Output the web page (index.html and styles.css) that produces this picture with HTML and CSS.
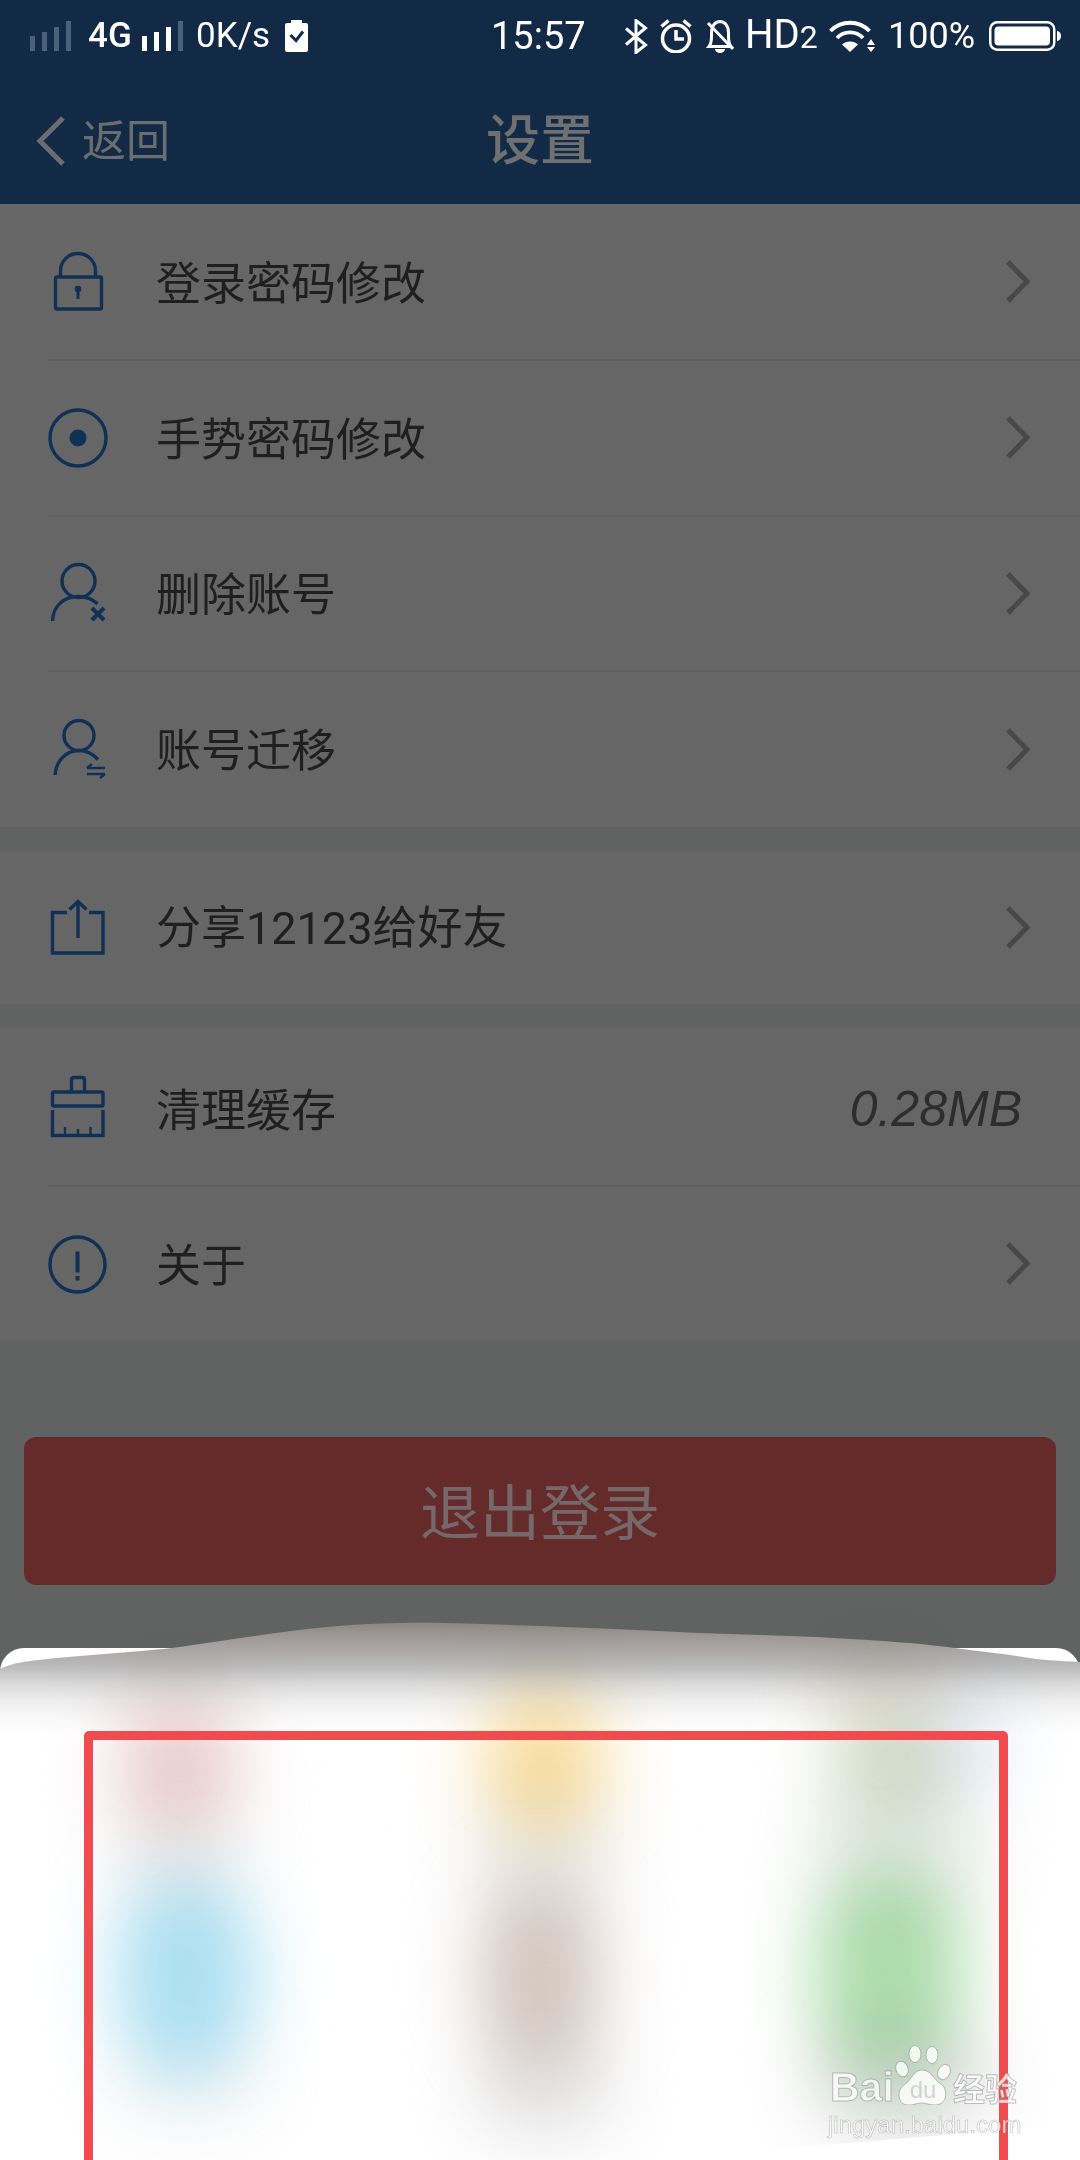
FILE: index.html
```html
<!DOCTYPE html>
<html lang="zh-CN">
<head>
<meta charset="utf-8">
<title>设置</title>
<link rel="stylesheet" href="styles.css">
</head>
<body>
<div class="page">
  <header class="header">
    <div class="status">
      <svg class="sig sig-a" viewBox="0 0 41 30"><g class="dim"><rect x="0" y="15" width="5" height="15"/><rect x="12" y="11" width="5" height="19"/><rect x="24" y="6" width="5" height="24"/><rect x="36" y="0" width="5" height="30"/></g></svg>
      <span class="st st-4g">4G</span>
      <svg class="sig sig-b" viewBox="0 0 41 30"><g class="wht"><rect x="0" y="15" width="5" height="15"/><rect x="12" y="11" width="5" height="19"/><rect x="24" y="6" width="5" height="24"/></g><g class="dim"><rect x="36" y="0" width="5" height="30"/></g></svg>
      <span class="st st-speed">0K/s</span>
      <svg class="check" viewBox="0 0 23 32"><path class="wht" d="M6 0H17V3H21a2 2 0 0 1 2 2V30a2 2 0 0 1-2 2H2a2 2 0 0 1-2-2V5a2 2 0 0 1 2-2H6Z"/><path class="check-mark" d="M5.500 15L11 20.500L18 11.500"/></svg>
      <span class="st st-time">15:57</span>
      <svg class="bt" viewBox="0 0 24 35"><path d="M2 9.500L21.500 26L12 33.500V1.500L21.500 9L2 25.500"/></svg>
      <svg class="alarm" viewBox="0 0 32 34"><circle cx="16" cy="19.500" r="13.500"/><path d="M16 11V20H24M1.500 7.500L8.500 1.500M30.500 7.500L23.500 1.500"/></svg>
      <svg class="bell" viewBox="0 0 28 33"><path d="M3 26.500C6 23 5.500 19 5.500 13C5.500 6 9 1.500 14 1.500C19 1.500 22.500 6 22.500 13C22.500 19 22 23 25 26.500Z"/><path d="M2 3L27 29"/><path class="wht no-stroke" d="M9 29H19A5 4 0 0 1 9 29Z"/></svg>
      <span class="st st-hd">HD<span class="st-two">2</span></span>
      <svg class="wifi" viewBox="0 0 46 32"><path d="M1.500 11C12 0 30 0 40.500 11"/><path d="M8 18C15 10.500 27 10.500 34 18"/><path class="wht no-stroke" d="M13 24.500C17 20.500 25 20.500 29 24.500L21 32Z"/><path class="wht no-stroke" d="M38 25L42 19L46 25ZM38 27H46L42 32Z"/></svg>
      <span class="st st-pct">100%</span>
      <svg class="batt" viewBox="0 0 72 30"><rect x="1.250" y="1.250" width="64" height="27.500" rx="7"/><rect class="wht no-stroke" x="5.500" y="5.500" width="55.500" height="19" rx="4"/><path class="wht no-stroke" d="M68 10C70.500 10.500 72 12 72 15C72 18 70.500 19.500 68 20Z"/></svg>
    </div>
    <nav class="nav">
      <div class="back">
        <svg class="back-icon" viewBox="0 0 30 50"><path d="M27 2L4 25L27 48"/></svg>
        <span class="back-text">返回</span>
      </div>
      <h1 class="title">设置</h1>
      <div></div>
    </nav>
  </header>

  <section class="group">
    <div class="row">
      <svg class="ico" viewBox="0 0 60 60"><rect x="7.500" y="25" width="46" height="32" rx="1.500"/><path d="M12.500 25V19A17.500 17.500 0 0 1 47.500 19V25"/><circle class="fill" cx="30" cy="37" r="3.300"/><rect class="fill" x="28.500" y="37" width="3" height="10"/></svg>
      <span class="label">登录密码修改</span>
      <svg class="chev" viewBox="0 0 24 43"><path d="M2 2L21 21.500L2 41"/></svg>
    </div>
    <div class="row">
      <svg class="ico" viewBox="0 0 60 60"><circle cx="30" cy="30" r="28"/><circle class="fill" cx="30" cy="30" r="8.500"/></svg>
      <span class="label">手势密码修改</span>
      <svg class="chev" viewBox="0 0 24 43"><path d="M2 2L21 21.500L2 41"/></svg>
    </div>
    <div class="row">
      <svg class="ico" viewBox="0 0 60 60"><circle cx="30.500" cy="18" r="16.500"/><path d="M4.500 58C5 43 16 33.500 30 33.500C37 33.500 44 35.500 49.500 41"/><path class="thick" d="M44 45L56 57M56 45L44 57"/></svg>
      <span class="label">删除账号</span>
      <svg class="chev" viewBox="0 0 24 43"><path d="M2 2L21 21.500L2 41"/></svg>
    </div>
    <div class="row">
      <svg class="ico" viewBox="0 0 60 60"><circle cx="31" cy="16.500" r="15"/><path d="M7 56C8 42 18 31.500 31 31.500C38 31.500 45 35 50 40.500"/><path class="thin" d="M39 49H57M39 49L44 45M39 55H57M57 55L52 59"/></svg>
      <span class="label">账号迁移</span>
      <svg class="chev" viewBox="0 0 24 43"><path d="M2 2L21 21.500L2 41"/></svg>
    </div>
  </section>

  <section class="group group-share">
    <div class="row row-share">
      <svg class="ico" viewBox="0 0 60 60"><path d="M19 14.500H4.500V55H55V14.500H41"/><path d="M30 4V40M21.500 11.500L30 3.500L38.500 11.500"/></svg>
      <span class="label label-share">分享12123给好友</span>
      <svg class="chev" viewBox="0 0 24 43"><path d="M2 2L21 21.500L2 41"/></svg>
    </div>
  </section>

  <section class="group group-misc">
    <div class="row row-cache">
      <svg class="ico" viewBox="0 0 60 60"><rect x="4.500" y="13" width="50.500" height="14" rx="1.500"/><path d="M23.500 13V1C23.500 -1 24.500 -1.500 26 -1.500H34C35.500 -1.500 36.500 -1 36.500 1V13"/><path d="M4.500 31V56.500H55V31"/><path class="thin" d="M17 56V48M30 56V50M42.500 56V48"/></svg>
      <span class="label">清理缓存</span>
      <span class="size">0.28MB</span>
    </div>
    <div class="row row-about">
      <svg class="ico" viewBox="0 0 60 60"><circle cx="29.500" cy="30.500" r="27.500"/><path class="thick" d="M29.500 17.500V38.500M29.500 42V46.500"/></svg>
      <span class="label">关于</span>
      <svg class="chev" viewBox="0 0 24 43"><path d="M2 2L21 21.500L2 41"/></svg>
    </div>
  </section>

  <div class="logout">退出登录</div>

  <aside class="sheet">
    <svg class="veil" viewBox="0 0 1080 120">
      <defs>
        <linearGradient id="veil" x1="0" y1="0" x2="0" y2="120" gradientUnits="userSpaceOnUse">
          <stop offset="0" stop-color="#8f8685"/>
          <stop offset="0.083" stop-color="#9a9493"/>
          <stop offset="0.367" stop-color="#bcbcbc"/>
          <stop offset="0.5" stop-color="#d8d8d8"/>
          <stop offset="0.642" stop-color="#ededed"/>
          <stop offset="0.783" stop-color="#f8f8f8"/>
          <stop offset="0.92" stop-color="#ffffff"/>
        </linearGradient>
      </defs>
      <path fill="url(#veil)" d="M0 46C6 43 14 40 30 38C70 33 125 30 172 25C210 20 240 15 276 10C310 5 350 1 400 0C450 -1 500 2 540 3C590 5 640 7 678 9C720 11 770 12 816 14C870 17 920 20 954 25C985 29 1005 31 1023 34C1040 37 1060 38 1080 39V120H0Z"/>
    </svg>
    <i class="blob b-g1"></i>
    <i class="blob b-g2"></i>
    <i class="blob b-g3"></i>
    <i class="blob b-g4"></i>
    <i class="blob b-g5"></i>
    <i class="blob b-g6"></i>
    <i class="blob b-red"></i>
    <i class="blob b-yellow"></i>
    <i class="blob b-peach"></i>
    <i class="blob b-sage"></i>
    <i class="blob b-ice"></i>
    <i class="blob b-blue"></i>
    <i class="blob b-brown"></i>
    <i class="blob b-green"></i>
    <div class="frame"></div>
    <div class="mark">
      <div class="mark-top">
        <span class="mark-bai">Bai</span>
        <svg class="paw" viewBox="0 0 56 60">
          <ellipse cx="7" cy="24" rx="6" ry="8" transform="rotate(-20 7 24)"/>
          <ellipse cx="20" cy="9" rx="6" ry="8.500"/>
          <ellipse cx="37" cy="10" rx="6" ry="8.500"/>
          <ellipse cx="49" cy="27" rx="6" ry="8" transform="rotate(25 49 27)"/>
          <path d="M27 25C36 25 38 34 46 39C54 45 52 60 40 60C34 60 31 58 27 58C22 58 20 60 13 60C3 60 1 46 9 40C17 35 18 25 27 25Z"/>
          <text class="paw-du" x="28" y="53">du</text>
        </svg>
        <span class="mark-jy">经验</span>
      </div>
      <div class="mark-url">jingyan.baidu.com</div>
    </div>
  </aside>
</div>
</body>
</html>
```

FILE: styles.css
```css
* { box-sizing: border-box; }
html, body { margin: 0; padding: 0; }
body {
  width: 1080px;
  height: 2160px;
  overflow: hidden;
  font-family: Roboto, "Noto Sans CJK SC", sans-serif;
  background: #606362;
}
.page { position: relative; width: 1080px; height: 2160px; overflow: hidden; background: #606362; }

/* header */
.header { height: 204px; background: #132a46; display: flex; flex-direction: column; }
.status { height: 72px; padding-left: 30px; display: flex; align-items: center; color: #fff; }
.status svg { fill: none; stroke: #fff; stroke-width: 3; flex: none; }
.status .dim { fill: #4a5f78; stroke: none; }
.status .wht { fill: #fff; stroke: none; }
.status .no-stroke { stroke: none; }
.st { line-height: 72px; flex: none; }
.sig { width: 41px; height: 30px; }
.st-4g { margin-left: 17px; font-size: 35px; font-weight: 500; width: 44px; }
.sig-b { margin-left: 10px; }
.st-speed { margin-left: 13px; font-size: 35px; width: 76px; }
.check { width: 23px; height: 32px; margin-left: 13px; }
.status .check-mark { stroke: #132a46; stroke-width: 3; fill: none; }
.st-time { margin-left: 183px; font-size: 38px; width: 133px; }
.bt { width: 24px; height: 35px; }
.alarm { width: 32px; height: 34px; margin-left: 12px; }
.status .alarm { stroke-width: 3.500; }
.bell { width: 28px; height: 33px; margin-left: 14px; }
.st-hd { margin-left: 11px; font-size: 40px; width: 73px; }
.st-two { font-size: 32px; }
.wifi { width: 46px; height: 32px; margin-left: 11px; }
.status .wifi { stroke-width: 3.800; }
.st-pct { margin-left: 13px; font-size: 36px; width: 101px; }
.batt { width: 72px; height: 30px; }
.status .batt { stroke-width: 2.500; }

.nav {
  flex: 1;
  display: grid;
  grid-template-columns: 1fr auto 1fr;
  align-items: center;
  padding: 4px 0 0 36px;
  color: #6b6e70;
}
.back { display: flex; align-items: center; gap: 16px; font-size: 44px; }
.back-text { margin-top: 3px; line-height: 60px; }
.back-icon { width: 30px; height: 50px; fill: none; stroke: #6b6e70; stroke-width: 5; flex: none; margin-top: 2px; }
.title { margin: 3px 36px 0 0; font-size: 54px; font-weight: 500; color: #6e7072; line-height: 1; }

/* list */
.group { background: #666; }
.group-share { margin-top: 24px; }
.group-misc { margin-top: 23px; }
.row {
  position: relative;
  height: 155.750px;
  padding: 0 50px 0 48px;
  display: flex;
  align-items: center;
}
.row + .row::before {
  content: "";
  position: absolute;
  left: 48px;
  right: 0;
  top: -1px;
  height: 2px;
  background: #5e5e5e;
}
.row-share { height: 153px; }
.row-cache { height: 159px; padding-top: 5px; padding-right: 58px; }
.row-about { height: 155px; }
.ico {
  width: 60px;
  height: 60px;
  flex: none;
  overflow: visible;
  fill: none;
  stroke: #113056;
  stroke-width: 3.400;
}
.ico .fill { fill: #113056; stroke: none; }
.ico .thick { stroke-width: 4; }
.ico .thin { stroke-width: 2.400; }
.label { flex: 1; margin: 6px 0 0 48px; font-size: 45px; line-height: 60px; color: #1f1f1f; }
.label-share { margin-top: 3px; }
.chev { width: 24px; height: 43px; flex: none; fill: none; stroke: #484848; stroke-width: 5; }
.size {
  flex: none;
  font-family: "Liberation Sans", sans-serif;
  font-style: italic;
  font-size: 50px;
  line-height: 60px;
  color: #2d2d2d;
}

/* logout */
.logout {
  margin: 96px 24px 0;
  height: 148px;
  padding-bottom: 5px;
  border-radius: 12px;
  background: #652b2b;
  color: #76686a;
  font-size: 60px;
  display: flex;
  align-items: center;
  justify-content: center;
}

/* bottom sheet */
.sheet {
  position: absolute;
  left: 0;
  right: 0;
  top: 1648px;
  height: 512px;
  background: #fff;
  border-radius: 24px 24px 0 0;
}
.veil { position: absolute; left: 0; top: -25px; width: 1080px; height: 120px; overflow: visible; }

.blob {
  position: absolute;
  display: block;
  border-radius: 50%;
  background: var(--c);
  filter: blur(36px);
  mix-blend-mode: multiply;
}
.b-red    { --c: #e8cccc; left: 118px; top: 42px;  width: 120px; height: 150px; }
.b-yellow { --c: #f9dd9b; left: 484px; top: 37px;  width: 120px; height: 150px; }
.b-peach  { --c: #efe5d8; left: 825px; top: 12px;  width: 110px; height: 80px; }
.b-sage   { --c: #d3e2cc; left: 830px; top: 62px;  width: 120px; height: 120px; }
.b-ice    { --c: #e2e9f5; left: 910px; top: 50px;  width: 100px; height: 90px; }
.b-g1     { --c: #f5f5f5; left: 98px;  top: 157px; width: 160px; height: 110px; }
.b-g2     { --c: #eeeeee; left: 464px; top: 137px; width: 160px; height: 130px; }
.b-g3     { --c: #ebefeb; left: 805px; top: 137px; width: 190px; height: 150px; }
.b-blue   { --c: #aadff2; left: 116px; top: 224px; width: 140px; height: 210px; }
.b-brown  { --c: #d3c4bc; left: 480px; top: 232px; width: 120px; height: 190px; }
.b-green  { --c: #addfad; left: 813px; top: 220px; width: 150px; height: 210px; }
.b-g4     { --c: #f7f7f7; left: 100px; top: 397px; width: 180px; height: 90px; }
.b-g5     { --c: #e8e8e8; left: 469px; top: 387px; width: 150px; height: 110px; }
.b-g6 {
  --c: #dedede;
  left: 810px; top: 372px; width: 180px; height: 120px;
  clip-path: polygon(-50% -80%, 150% -80%, 150% 88%, 105% 92%, -17% 107%, -50% 107%);
}

.frame {
  position: absolute;
  left: 84px;
  top: 83px;
  width: 924px;
  height: 440px;
  border: 9px solid #f04b4f;
  border-radius: 5px;
}

.mark {
  position: absolute;
  left: 828px;
  top: 397px;
  width: 200px;
  color: rgba(255, 255, 255, 0.75);
  -webkit-text-stroke: 1px rgba(140, 140, 140, 0.55);
}
.mark-top { display: flex; align-items: flex-end; height: 60px; }
.mark-bai { margin-left: 2px; font-family: "Liberation Sans", sans-serif; font-weight: 700; font-size: 41px; line-height: 36px; width: 65px; }
.paw { width: 56px; height: 60px; flex: none; fill: rgba(255, 255, 255, 0.8); stroke: rgba(130, 130, 130, 0.5); stroke-width: 1; }
.paw-du { font-family: "Liberation Sans", sans-serif; font-size: 24px; font-weight: 400; text-anchor: middle; fill: #d2d2d2; stroke: none; }
.mark-jy { margin-left: 2px; font-family: "Noto Sans CJK SC", sans-serif; font-weight: 700; font-size: 32px; line-height: 36px; }
.mark-url { margin-top: 6px; font-family: "Liberation Sans", sans-serif; font-size: 24px; line-height: 28px; white-space: nowrap; -webkit-text-stroke: 0.6px rgba(140, 140, 140, 0.5); }
```
